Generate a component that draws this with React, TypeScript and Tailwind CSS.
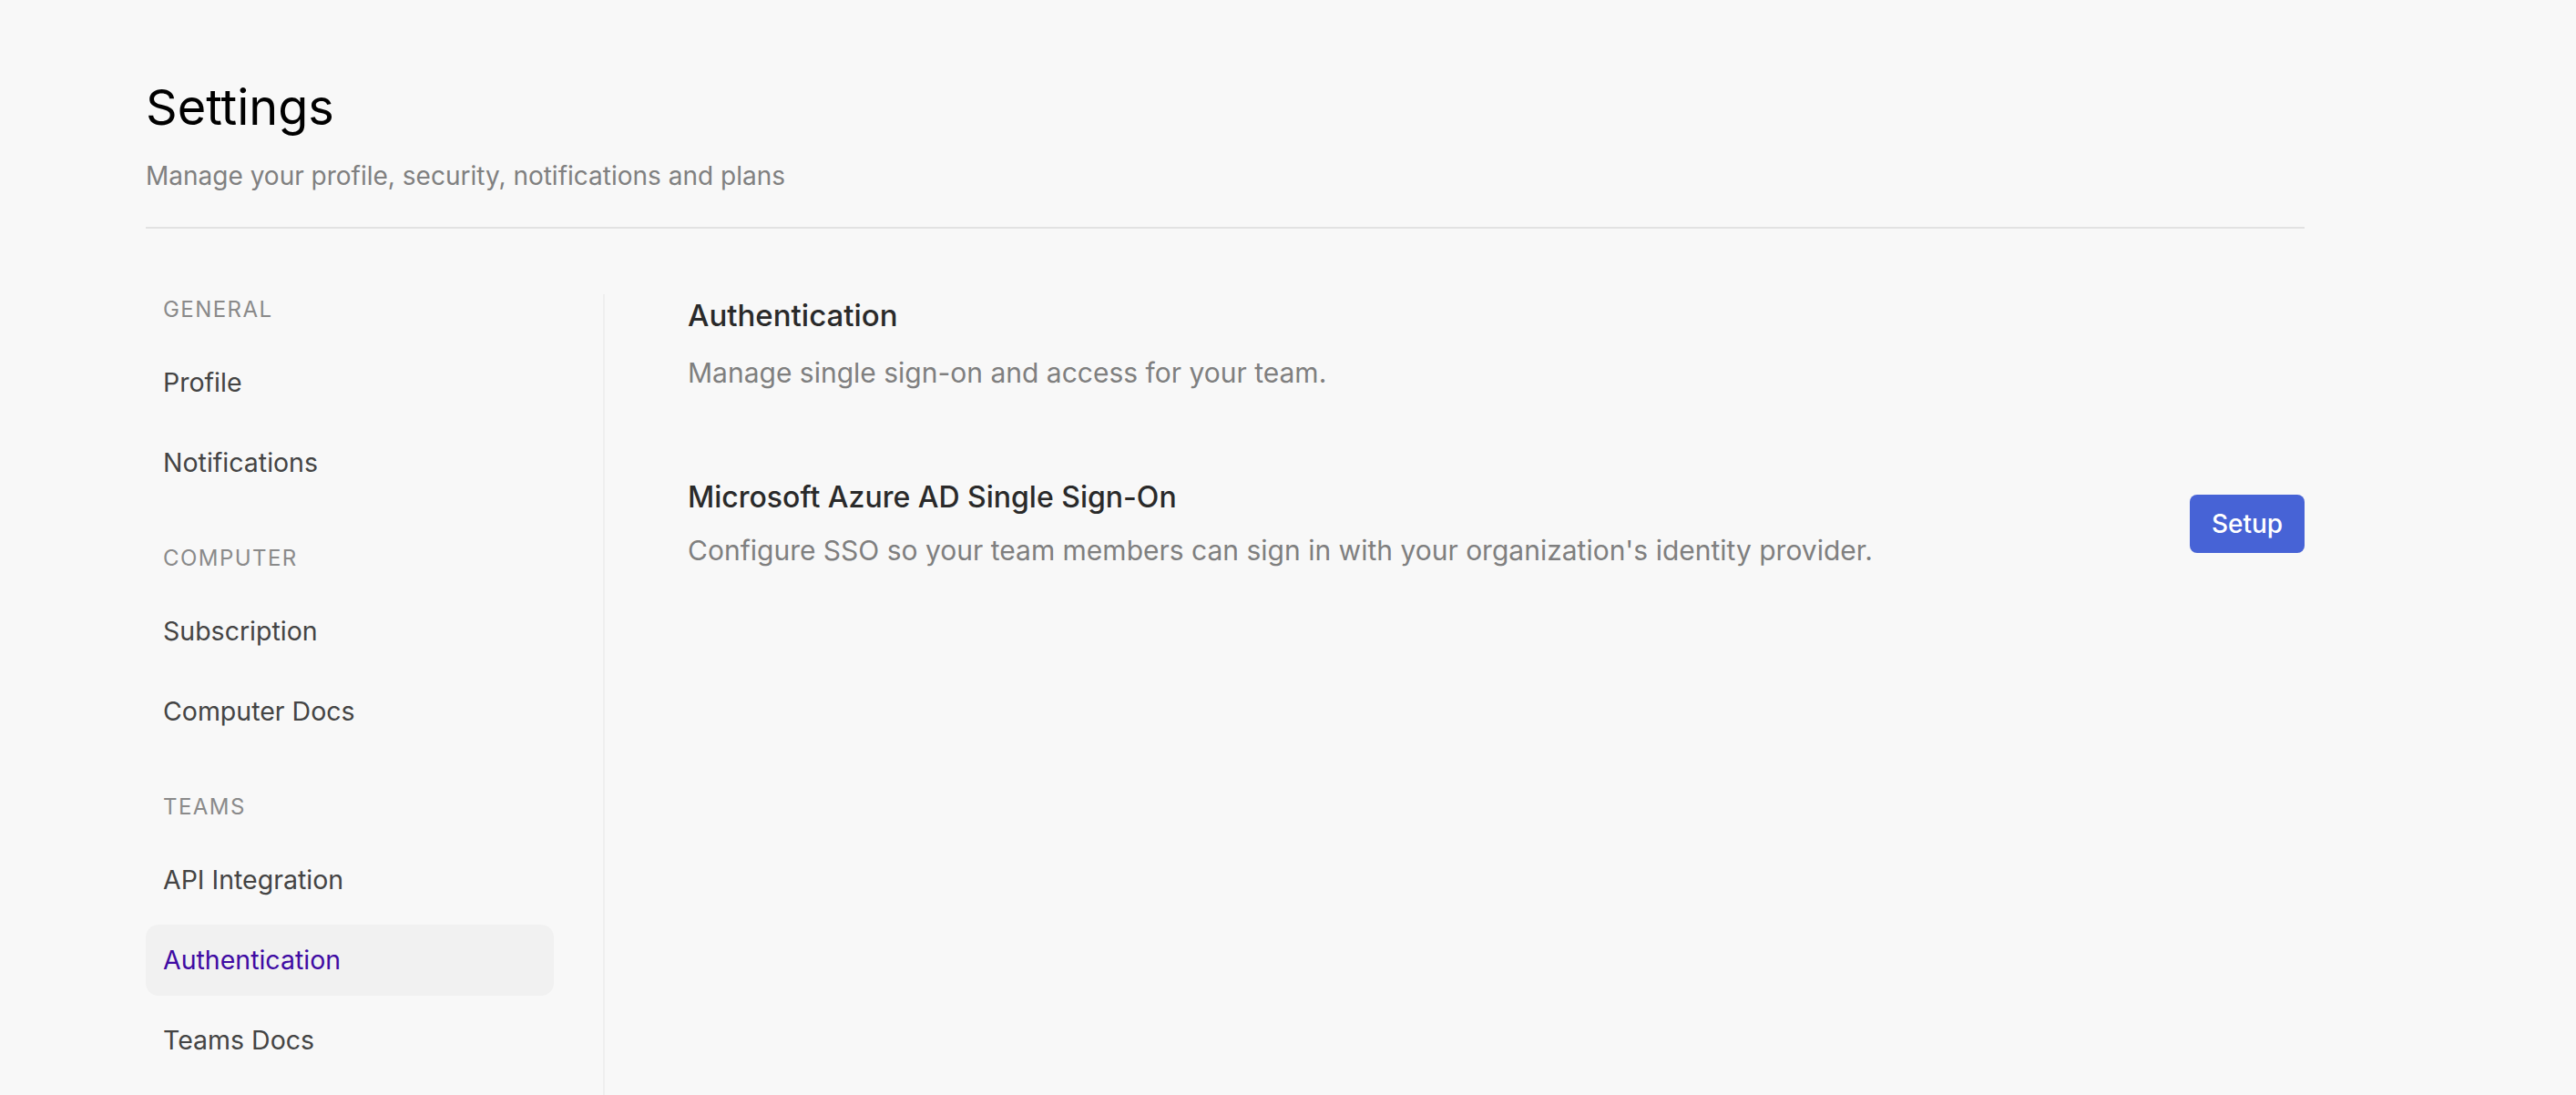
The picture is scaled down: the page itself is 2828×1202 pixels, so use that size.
import React from "react";

type NavSection = {
  label: string;
  items: string[];
};

const sections: NavSection[] = [
  { label: "General", items: ["Profile", "Notifications"] },
  { label: "Computer", items: ["Subscription", "Computer Docs"] },
  { label: "Teams", items: ["API Integration", "Authentication", "Teams Docs"] },
];

const activeItem = "Authentication";

function Sidebar() {
  return (
    <nav className="w-[504px] shrink-0 border-r-2 border-[#efefef] pb-[60px] pr-[54px] pt-[1px]">
      <div className="flex flex-col gap-[50px]">
        {sections.map((section) => (
          <div key={section.label} className="flex flex-col">
            <div className="mb-[25px] px-[19px] text-[24px] leading-[32px] uppercase tracking-[0.06em] text-[#8a8a8a]">
              {section.label}
            </div>
            <ul className="flex flex-col gap-[10px]">
              {section.items.map((item) => {
                const active = item === activeItem;
                return (
                  <li key={item}>
                    <a
                      href="#"
                      className={
                        active
                          ? "flex h-[78px] items-center rounded-[14px] bg-[#f1f1f1] px-[19px] text-[28.5px] text-[#3f0ba3]"
                          : "flex h-[78px] items-center rounded-[14px] px-[19px] text-[28.5px] text-[#444444]"
                      }
                    >
                      {item}
                    </a>
                  </li>
                );
              })}
            </ul>
          </div>
        ))}
      </div>
    </nav>
  );
}

function AuthPanel() {
  return (
    <section className="flex-1 pl-[91px] pt-[3px]">
      <h2 className="text-[33px] leading-[40px] font-medium text-[#2a2a2a]">Authentication</h2>
      <p className="mt-[23px] text-[30px] leading-[40px] text-[#7f7f7f]">
        Manage single sign-on and access for your team.
      </p>

      <div className="mt-[97px] flex items-center justify-between">
        <div className="flex flex-col gap-[18px]">
          <h3 className="text-[32px] leading-[40px] font-medium text-[#2a2a2a]">
            Microsoft Azure AD Single Sign-On
          </h3>
          <p className="text-[30px] leading-[40px] text-[#7f7f7f]">
            Configure SSO so your team members can sign in with your organization's identity provider.
          </p>
        </div>
        <button className="h-[64px] w-[126px] rounded-[8px] bg-[#4763d6] text-[28px] font-medium text-white">
          Setup
        </button>
      </div>
    </section>
  );
}

export default function App() {
  return (
    <div
      className="min-h-screen w-full bg-[#f8f8f8]"
      style={{ fontFamily: "Inter, 'Noto Sans', sans-serif" }}
    >
      <div className="ml-[160px] w-[2370px] pt-[88px]">
        <header className="border-b-2 border-[#e2e2e2] pb-[36px]">
          <h1 className="text-[54px] leading-[60px] text-[#000000]">Settings</h1>
          <p className="mt-[25px] text-[28px] leading-[40px] text-[#808080]">
            Manage your profile, security, notifications and plans
          </p>
        </header>

        <div className="mt-[72px] flex">
          <Sidebar />
          <AuthPanel />
        </div>
      </div>
    </div>
  );
}
